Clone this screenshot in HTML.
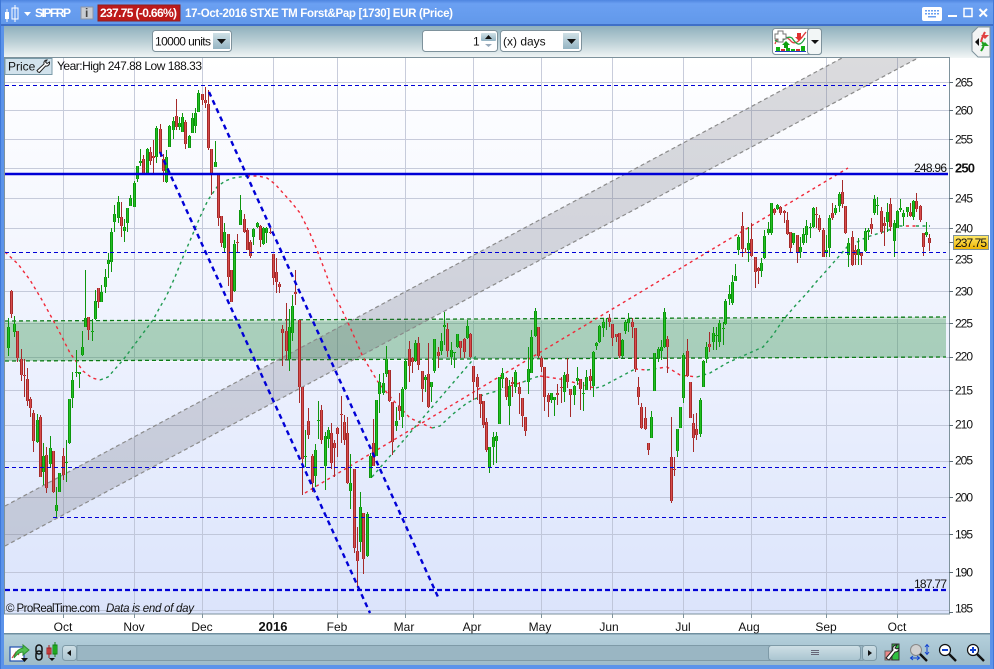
<!DOCTYPE html>
<html><head><meta charset="utf-8"><style>
html,body{margin:0;padding:0;background:#fff;width:994px;height:669px;overflow:hidden}
svg{display:block;position:absolute;left:0;top:0}
text{font-family:"Liberation Sans",sans-serif;font-size:12px;fill:#111}
</style></head><body>
<svg width="994" height="669" viewBox="0 0 994 669" xmlns="http://www.w3.org/2000/svg">
<defs>
<linearGradient id="tb" x1="0" y1="0" x2="0" y2="1"><stop offset="0" stop-color="#4f86e0"/><stop offset=".15" stop-color="#6ba0f2"/><stop offset="1" stop-color="#6198ea"/></linearGradient>
<linearGradient id="bar" x1="0" y1="0" x2="0" y2="1"><stop offset="0" stop-color="#8fb0bd"/><stop offset=".5" stop-color="#bcd0d6"/><stop offset="1" stop-color="#f2f6f6"/></linearGradient>
<linearGradient id="chart" x1="0" y1="0" x2="0" y2="1"><stop offset="0" stop-color="#ffffff"/><stop offset=".5" stop-color="#eef2fe"/><stop offset="1" stop-color="#dbe4fb"/></linearGradient>
<linearGradient id="bot" x1="0" y1="0" x2="0" y2="1"><stop offset="0" stop-color="#b5d0dc"/><stop offset="1" stop-color="#9dbbc9"/></linearGradient>
<linearGradient id="btn" x1="0" y1="0" x2="0" y2="1"><stop offset="0" stop-color="#cfe0e6"/><stop offset="1" stop-color="#94b4c3"/></linearGradient>
<linearGradient id="yel" x1="0" y1="0" x2="0" y2="1"><stop offset="0" stop-color="#ffe96a"/><stop offset="1" stop-color="#f0b400"/></linearGradient>
<linearGradient id="thumb" x1="0" y1="0" x2="0" y2="1"><stop offset="0" stop-color="#cfe0e6"/><stop offset="1" stop-color="#a9c4d0"/></linearGradient>
<path id="gw" d="M8 318V356M14 316V337M37 414V443M43 443V485M50 436V468M56 487V517M59 473V492M66 440V482M69 399V444M72 372V408M76 350V377M79 372V388M82 331V356M85 270V327M92 319V341M95 290V320M101 285V302M105 269V293M108 253V278M111 228V272M114 205V232M118 196V223M124 219V242M127 208V232M130 195V206M134 181V207M137 166V182M140 149V166M147 148V175M156 126V163M166 150V183M169 125V147M173 117V139M179 117V130M182 113V132M189 135V148M192 113V133M195 108V133M198 90V112M215 141V167M224 223V252M234 240V292M240 195V225M253 228V245M257 222V228M263 227V245M266 227V243M289 309V371M292 295V341M305 430V467M315 444V487M318 401V439M325 432V490M328 427V448M350 454V509M360 492V552M367 512V557M370 453V478M376 400V456M379 374V413M383 373V395M386 346V377M396 407V431M402 387V428M405 360V390M415 340V362M425 375V392M431 382V402M434 339V373M441 333V355M444 312V345M451 342V365M454 352V368M457 334V348M467 320V339M489 447V473M493 432V465M496 432V463M499 377V424M502 368V388M509 380V425M515 370V393M528 347V394M531 330V373M535 308V337M551 393V403M554 397V416M564 372V402M574 385V405M577 367V385M583 382V411M586 370V390M593 351V397M596 342V350M599 325V343M603 318V337M606 318V330M622 339V358M625 320V334M628 313V332M651 411V438M654 353V391M658 347V362M661 340V360M664 308V348M677 429V457M680 407V428M683 353V403M700 398V437M703 360V387M706 342V363M713 327V350M716 327V350M719 320V347M723 322V345M725 299V325M729 285V305M732 275V305M735 264V281M738 235V255M748 227V262M761 258V277M764 230V259M768 222V235M771 203V235M777 204V210M793 233V245M800 237V258M803 228V245M806 220V243M810 223V238M813 207V228M826 235V257M829 215V257M835 205V215M839 192V212M848 238V267M858 238V265M865 228V252M868 228V240M874 195V215M877 197V215M887 203V232M894 220V257M897 210V228M900 199V212M903 210V226M907 207V217M913 200V220M926 222V237"/>
<path id="gb" d="M8 327V348M14 324V332M37 420V442M43 456V472M50 448V464M56 505V511M59 473V492M66 462V463M69 399V443M72 380V398M76 372V373M79 372V374M82 347V355M85 318V327M92 331V332M95 301V319M101 292V302M105 277V287M108 260V264M111 232V262M114 214V222M118 202V218M124 227V231M127 208V223M130 198V206M134 183V207M137 166V179M140 161V163M147 149V173M156 128V157M166 157V182M169 126V147M173 121V130M179 123V127M182 117V132M189 136V148M192 118V133M195 113V126M198 93V112M215 162V167M224 232V248M234 244V291M240 210V225M253 229V237M257 223V227M263 228V244M266 228V233M289 327V359M292 306V333M305 456V457M315 450V476M318 420V421M325 436V466M328 430V439M350 483V491M360 507V542M367 514V556M370 456V478M376 400V456M379 382V394M383 383V393M386 359V374M396 421V426M402 389V417M405 361V389M415 343V361M425 377V380M431 382V387M434 339V371M441 341V351M444 325V327M451 350V357M454 352V353M457 334V347M467 326V338M489 447V467M493 437V447M496 436V441M499 377V424M502 373V379M509 386V406M515 372V387M528 369V382M531 337V373M535 311V336M551 393V400M554 397V400M564 375V392M574 386V395M577 378V381M583 393V394M586 377V390M593 352V386M596 343V346M599 326V342M603 322V328M622 340V356M625 322V331M628 319V323M651 417V438M654 353V391M658 349V358M661 347V351M664 312V347M677 429V451M680 407V428M683 355V398M700 400V434M703 361V387M706 347V359M713 333V342M716 335V336M719 323V342M723 328V329M725 301V324M729 294V299M732 282V303M735 276V281M738 237V250M748 243V250M761 263V271M764 236V258M768 229V233M771 203V233M777 205V209M793 233V243M800 247V252M803 234V243M806 226V235M810 227V228M813 208V227M826 250V253M829 218V248M835 208V213M839 194V206M848 243V255M858 249V255M865 231V251M868 230V232M874 199V213M877 205V206M887 212V222M894 223V241M897 211V228M900 208V210M903 213V217M907 207V212M913 201V217M926 232V235"/>
<path id="rw" d="M11 290V318M17 331V362M21 349V381M24 359V397M27 368V406M30 397V417M33 410V452M40 415V477M46 447V493M53 451V493M63 448V480M88 317V340M98 288V308M121 202V237M143 155V175M150 147V165M153 140V173M160 124V157M163 154V182M176 99V130M185 120V149M202 94V105M205 87V108M208 90V150M211 149V195M218 174V226M221 216V247M228 234V286M231 270V302M237 234V253M244 214V233M247 228V250M250 240V258M260 225V247M270 228V234M273 254V285M276 258V293M279 282V293M282 325V366M286 303V360M295 270V305M299 320V403M302 387V495M308 408V439M312 454V492M321 405V444M331 423V469M334 440V477M337 427V457M341 396V443M344 415V445M347 417V484M354 469V553M357 527V587M363 513V574M373 419V466M389 370V402M392 402V455M399 393V420M409 341V382M412 357V373M418 337V370M422 371V402M428 343V408M438 347V368M447 323V357M460 341V358M464 338V358M470 333V358M473 366V400M477 374V400M480 394V418M483 401V428M486 418V452M506 377V400M512 377V397M519 382V414M522 398V427M525 417V436M538 327V358M541 356V372M544 367V411M548 393V417M557 384V405M561 377V403M567 358V388M570 389V417M580 379V410M590 369V390M609 314V327M612 324V346M616 334V342M619 333V358M632 318V338M635 328V372M638 377V405M641 403V429M645 407V430M648 443V455M667 336V373M671 417V503M674 457V476M687 339V377M690 382V418M693 414V452M696 413V440M709 332V352M742 212V257M745 248V253M751 223V257M755 257V288M758 267V284M774 208V215M780 206V215M784 210V223M787 212V235M790 232V253M797 235V263M816 207V228M819 215V232M823 228V257M832 203V220M842 180V208M845 206V234M852 231V266M855 245V265M861 252V265M871 218V234M881 207V234M884 217V246M890 198V231M910 203V217M916 193V212M920 205V222M923 233V256M929 234V251"/>
<path id="rb" d="M11 291V314M17 331V358M21 359V375M24 375V376M27 379V401M30 399V408M33 413V441M40 417V477M46 455V488M53 451V492M63 456V475M88 317V330M98 288V302M121 217V226M143 159V173M150 152V161M153 156V158M160 129V153M163 159V171M176 116V127M185 122V144M202 94V100M205 100V103M208 104V148M211 149V173M218 174V218M221 216V243M228 234V277M231 270V302M237 242V243M244 219V232M247 230V250M250 242V256M260 226V240M270 232V233M273 254V278M276 272V282M279 284V287M282 329V333M286 331V351M295 292V294M299 320V387M302 387V459M308 421V435M312 456V483M321 410V440M331 433V463M334 443V448M337 428V434M341 414V415M344 422V440M347 433V483M354 469V548M357 551V561M363 513V559M373 443V466M389 370V401M392 402V442M399 406V411M409 349V366M412 358V362M418 343V365M422 371V389M428 374V407M438 352V356M447 329V351M460 341V348M464 339V352M470 334V357M473 366V382M477 377V387M480 394V404M483 401V425M486 422V450M506 378V397M512 382V384M519 387V394M522 398V416M525 417V431M538 327V356M541 358V367M544 367V397M548 395V402M557 393V395M561 387V388M567 374V382M570 389V395M580 379V389M590 376V381M609 318V322M612 324V338M616 334V337M619 333V356M632 322V327M635 328V369M638 387V397M641 407V428M645 418V429M648 443V450M667 339V347M671 457V501M674 469V470M687 351V376M690 382V418M693 423V438M696 429V435M709 344V347M742 226V249M745 252V253M751 239V256M755 257V272M758 268V271M774 209V213M780 207V213M784 211V213M787 220V234M790 232V248M797 235V252M816 214V215M819 218V230M823 230V257M832 213V218M842 192V204M845 206V233M852 237V265M855 250V255M861 252V256M871 224V229M881 211V232M884 223V226M890 204V227M910 212V216M916 201V209M920 206V220M923 233V247M929 238V243"/>
</defs>

<!-- window frame -->
<rect width="994" height="669" fill="#5b93ea"/>
<rect x="0" y="0" width="994" height="25" fill="url(#tb)"/>
<rect x="0" y="24" width="994" height="2" fill="#3f70c8"/>
<rect x="4" y="26" width="986" height="32" fill="url(#bar)"/>
<rect x="4" y="58" width="986" height="576" fill="#fff"/>
<rect x="4" y="634" width="986" height="31" fill="url(#bot)"/>
<rect x="4" y="633" width="986" height="1.5" fill="#6f8f9f"/>
<rect x="0" y="0" width="1" height="669" fill="#3f78d8"/>
<rect x="993" y="0" width="1" height="669" fill="#3f78d8"/>

<!-- chart bg -->
<rect x="5" y="58" width="944" height="556" fill="url(#chart)"/>
<!-- grid -->
<g stroke="#b6bccf" stroke-width="1" opacity=".75">
<path d="M5 82.5H949M5 110.5H949M5 139.5H949M5 168.5H949M5 198.5H949M5 228.5H949M5 259.5H949M5 291.5H949M5 323.5H949M5 357.5H949M5 390.5H949M5 425.5H949M5 461.5H949M5 497.5H949M5 534.5H949M5 572.5H949M5 610.5H949"/>
<path d="M63.5 58V614M134.5 58V614M202.5 58V614M273.5 58V614M337.5 58V614M405.5 58V614M473.5 58V614M541.5 58V614M612.5 58V614M683.5 58V614M751.5 58V614M826.5 58V614M897.5 58V614"/>
</g>

<!-- green zone -->
<polygon points="5,321 946,317 946,357 5,361" fill="#2f8f45" fill-opacity=".36"/>
<g fill="none" stroke-width="1.3">
<path d="M5 321L946 317M5 361L946 357" stroke="#fff" stroke-opacity=".5" transform="translate(0,1)"/>
<path d="M5 321L946 317M5 361L946 357" stroke="#0a7a16" stroke-dasharray="4 3"/>
</g>
<!-- grey band -->
<polygon points="5,506 842,58 918,58 5,546" fill="#5a5a64" fill-opacity=".22"/>
<path d="M5 506L842 58M5 546L918 58" fill="none" stroke="#8b8b8b" stroke-width="1.2" stroke-dasharray="4 3"/>

<!-- moving avg -->
<g fill="none" stroke-width="1.4" stroke-dasharray="3 3.5">
<path stroke="#f02838" d="M5 252L18 264L30 280L42 300L53 320L62 337L70 353L83 371L92 378L100 380"/>
<path stroke="#1f9a50" d="M100 380L108 377L123 360L138 340L153 320L160 307L166 297L175 277L183 257L192 236L200 217L208 200L217 187L225 181L233 178L247 176"/>
<path stroke="#f02838" d="M247 176L258 176L267 178L275 184L283 193L292 203L300 213L309 231L317 250L325 271L333 293L341 308L350 327L363 357L378 382L393 400L410 418L423 424L432 428"/>
<path stroke="#1f9a50" d="M432 428L440 426L453 414L467 403L483 395L497 391L510 386"/>
<path stroke="#f02838" d="M510 386L523 382"/>
<path stroke="#1f9a50" d="M523 382L533 378L540 376"/>
<path stroke="#f02838" d="M540 376L560 379L580 384L590 387L596 388"/>
<path stroke="#1f9a50" d="M596 388L603 386L620 377L635 369"/>
<path stroke="#f02838" d="M635 369L647 370"/>
<path stroke="#1f9a50" d="M647 370L660 368"/>
<path stroke="#f02838" d="M660 368L667 367L680 375L697 377"/>
<path stroke="#1f9a50" d="M697 377L710 373L727 363L745 355L763 347L773 335L783 320L795 306L807 293L817 281L827 270L847 247L867 237L883 232L900 226L906 226"/>
<path stroke="#f02838" d="M906 226H916"/>
<path stroke="#1f9a50" d="M916 226H930"/>
<path stroke="#1f9a50" d="M372 477L477 355"/>
<path stroke="#f02838" d="M305 493L848 168"/>
</g>

<!-- candles -->
<g transform="translate(.5,0)" fill="none">
<use href="#gw" stroke="#0e950e" stroke-width="1"/>
<use href="#rw" stroke="#a52a2a" stroke-width="1"/>
<use href="#gb" stroke="#0c960c" stroke-width="3"/>
<use href="#gb" stroke="#22bf22" stroke-width="1"/>
<use href="#rb" stroke="#a52a2a" stroke-width="3"/>
<use href="#rb" stroke="#d84c4c" stroke-width="1"/>
</g>

<!-- levels -->
<g fill="none" stroke="#0000d6">
<path d="M5 85.5H946M5 252.5H946M5 467.5H946M53 517.5H946" stroke-width="1" stroke-dasharray="4 3"/>
<path d="M5 174H948" stroke-width="2.4"/>
<path d="M5 590H948" stroke-width="2.2" stroke-dasharray="5 3"/>
<path d="M160 152L370 613M209 92L438 597" stroke-width="2.4" stroke-dasharray="5 4"/>
</g>

<!-- chart border -->
<path d="M4.5 58V614H949.5V57.5H4" fill="none" stroke="#7e929c" stroke-width="1"/>
<rect x="949" y="58" width="1" height="556" fill="#7e929c"/>

<!-- top left chart labels -->
<rect x="5" y="58.5" width="47" height="16" fill="#d2e2ec" stroke="#7a9aa8"/>
<text x="8" y="70.5">Price</text>
<g fill="none" stroke="#222" stroke-width="1" transform="translate(36,59)"><path d="M2 13L1 11.5L8 5C7.5 3 8.5 1 11 1L9.5 3L11 4.5L13.5 3C14 5.5 12 7.5 9.5 7L3.5 13.5Z" fill="#fff"/></g>
<text x="57" y="70" textLength="145" lengthAdjust="spacing">Year:High 247.88 Low 188.33</text>
<text x="6" y="612" style="font-size:11.5px" textLength="94">© ProRealTime.com</text>
<text x="106" y="612" style="font-style:italic;font-size:11.5px" textLength="88">Data is end of day</text>

<!-- level labels -->
<text x="914" y="172" textLength="33">248.96</text>
<text x="914" y="588" textLength="33">187.77</text>

<!-- y axis -->
<g stroke="#5a6a74" stroke-width="1"><path d="M949 82.5H953M949 110.5H953M949 139.5H953M949 168.5H953M949 198.5H953M949 228.5H953M949 242.5H953M949 259.5H953M949 291.5H953M949 323.5H953M949 357.5H953M949 390.5H953M949 425.5H953M949 461.5H953M949 497.5H953M949 534.5H953M949 572.5H953M949 612.5H953"/></g>
<g>
<text x="955" y="86.5" textLength="18">265</text><text x="955" y="114.5" textLength="18">260</text><text x="955" y="143.5" textLength="18">255</text>
<text x="955" y="172.5" textLength="20" style="font-weight:bold;font-size:13px">250</text>
<text x="955" y="202.5" textLength="18">245</text><text x="955" y="232.5" textLength="18">240</text><text x="955" y="263.5" textLength="18">235</text><text x="955" y="295.5" textLength="18">230</text><text x="955" y="327.5" textLength="18">225</text><text x="955" y="360.5" textLength="18">220</text><text x="955" y="394.5" textLength="18">215</text><text x="955" y="428.5" textLength="18">210</text><text x="955" y="464.5" textLength="18">205</text><text x="955" y="501.5" textLength="18">200</text><text x="955" y="538.5" textLength="18">195</text><text x="955" y="576.5" textLength="18">190</text><text x="955" y="612.5" textLength="18">185</text>
</g>
<rect x="953.5" y="235.5" width="35" height="14" fill="url(#yel)" stroke="#7f929c"/>
<text x="955" y="247" textLength="32">237.75</text>

<!-- x axis -->
<g stroke="#7e929c"><path d="M63.5 614V618M134.5 614V618M202.5 614V618M273.5 614V618M337.5 614V618M405.5 614V618M473.5 614V618M541.5 614V618M612.5 614V618M683.5 614V618M751.5 614V618M826.5 614V618M897.5 614V618"/></g>
<g text-anchor="middle">
<text x="63" y="631">Oct</text><text x="134" y="631">Nov</text><text x="202" y="631">Dec</text>
<text x="273" y="631" style="font-weight:bold;font-size:13px">2016</text>
<text x="337" y="631">Feb</text><text x="404" y="631">Mar</text><text x="472" y="631">Apr</text><text x="540" y="631">May</text><text x="609" y="631">Jun</text><text x="683" y="631">Jul</text><text x="749" y="631">Aug</text><text x="826" y="631">Sep</text><text x="897" y="631">Oct</text>
</g>

<!-- title bar -->
<g fill="#fff">
<rect x="5" y="12" width="4" height="7"/><rect x="6.5" y="9" width="1" height="13"/>
<rect x="12" y="8" width="6" height="11" fill="none" stroke="#fff"/><rect x="14.5" y="5" width="1" height="17"/>
<polygon points="24,12 31,12 27.5,16"/>
</g>
<text x="35" y="17" style="font-weight:bold;font-size:12px;fill:#fff" textLength="36">SIPFRP</text>
<rect x="81" y="7" width="12" height="12" fill="#c8ccd2" stroke="#8b95a8"/>
<text x="85" y="17" style="font-weight:bold;font-size:12px;fill:#444">i</text>
<rect x="98" y="5" width="82" height="16" fill="#bd1a1a" stroke="#8d2020"/>
<text x="100" y="17" style="font-weight:bold;font-size:12px;fill:#fff" textLength="77">237.75 (-0.66%)</text>
<text x="185" y="17" style="font-weight:bold;font-size:11.5px;fill:#fff" textLength="268">17-Oct-2016 STXE TM Forst&amp;Pap [1730] EUR (Price)</text>
<!-- keyboard & window controls -->
<rect x="922" y="7" width="20" height="14" rx="2" fill="#fff"/>
<g fill="#6a9ff0"><path d="M925 10h2v1.5h-2zM928 10h2v1.5h-2zM931 10h2v1.5h-2zM934 10h2v1.5h-2zM937 10h2v1.5h-2zM925 13h2v1.5h-2zM928 13h2v1.5h-2zM931 13h2v1.5h-2zM934 13h2v1.5h-2zM937 13h2v1.5h-2zM928 16h8v1.5h-8z"/></g>
<rect x="948" y="15" width="9" height="2" fill="#fff"/>
<rect x="964" y="8.5" width="8" height="8" fill="none" stroke="#fff" stroke-width="1.5"/>
<path d="M979.5 9L987 16.5M987 9L979.5 16.5" stroke="#fff" stroke-width="2" fill="none"/>

<!-- toolbar controls -->
<rect x="152.5" y="30.5" width="79" height="21" rx="3" fill="#fff" stroke="#7e929c"/>
<text x="155" y="45.5" textLength="56">10000 units</text>
<rect x="213" y="33" width="17" height="16" fill="url(#btn)"/>
<polygon points="217,39 226,39 221.5,44" fill="#111"/>

<rect x="422.5" y="30.5" width="75" height="21" rx="3" fill="#fff" stroke="#7e929c"/>
<text x="473" y="45.5">1</text>
<rect x="481" y="33" width="15" height="8" rx="1" fill="url(#btn)"/>
<polygon points="485,39 492,39 488.5,35" fill="#111"/>
<polygon points="485,44 492,44 488.5,47" fill="#9ab"/>
<rect x="500.5" y="30.5" width="81" height="21" rx="3" fill="#fff" stroke="#7e929c"/>
<text x="503" y="45.5">(x) days</text>
<rect x="563" y="33" width="16" height="16" fill="url(#btn)"/>
<polygon points="567,39 576,39 571.5,44" fill="#111"/>

<!-- indicator button -->
<rect x="772.5" y="28.5" width="49" height="26" rx="3" fill="#fff" stroke="#7e929c"/>
<rect x="807.5" y="28.5" width="14" height="26" rx="3" fill="#f2f6f6" stroke="#7e929c"/>
<polygon points="811,40 819,40 815,44" fill="#111"/>
<path d="M775 44C780 30 785 36 790 40C795 47 800 40 806 32" fill="none" stroke="#e04040" stroke-width="1.3"/>
<path d="M775 40C781 46 786 34 792 38C796 44 800 48 805 38" fill="none" stroke="#20a040" stroke-width="1.3"/>
<path d="M778 31h5v3h3v5h-3v3h-5v-3h-3v-5h3z" fill="#fff" stroke="#777"/>
<polygon points="786,41 790,45 788,45 788,48 784,48 784,45 782,45" fill="#10a010"/>
<polygon points="797,33 801,33 801,37 803,37 799,41 795,37 797,37" fill="#e03030"/>
<g fill="#10b010"><rect x="776" y="47" width="4" height="4"/><rect x="786" y="48" width="4" height="3"/><rect x="791" y="49" width="4" height="2"/><rect x="801" y="46" width="4" height="5"/></g>
<g fill="#d03030"><rect x="781" y="49" width="4" height="2"/><rect x="796" y="49" width="4" height="2"/></g>
<rect x="775" y="51" width="31" height="1" fill="#2040c0"/>

<!-- right tab -->
<path d="M990 27H978L972 33V51L978 57H990Z" fill="#f2f4f4" stroke="#7e929c"/>
<polygon points="979,38 975,42 979,46" fill="#111"/>
<path d="M985 32C983 36 982 37 981 42" fill="none" stroke="#e04040" stroke-width="2"/><polygon points="981,35 989,35 985,39" fill="#e04040"/>
<path d="M982 42C985 45 983 48 981 51" fill="none" stroke="#20a020" stroke-width="2"/><polygon points="981,46 989,46 985,42" fill="#20a020"/>

<!-- bottom bar -->
<rect x="10" y="647" width="14" height="14" fill="#fff" stroke="#2050b0" stroke-width="1.2"/>
<path d="M12 658L16 652L19 655" fill="none" stroke="#d03030"/>
<path d="M14 658C15 652 19 649 23 648V645L29 650L23 655V652C20 652 17 654 14 658Z" fill="#50c050" stroke="#2f8f2f"/>
<polygon points="21,658 28,658 24.5,662" fill="#111"/>
<g fill="none" stroke="#111" stroke-width="1.5"><rect x="36" y="645" width="6" height="9" rx="3"/><rect x="36" y="651" width="6" height="9" rx="3"/></g>
<rect x="47" y="648" width="4" height="6" fill="#e85858" stroke="#a02020"/><path d="M49 645V658" stroke="#a02020"/>
<rect x="53" y="645" width="4" height="9" fill="#30d030" stroke="#108010"/><path d="M55 642V657" stroke="#108010"/>
<polygon points="49,658 55,658 52,661" fill="#111"/>

<rect x="77" y="645" width="786" height="16" fill="#9ab6c3"/>
<rect x="77" y="645.5" width="786" height="15" fill="none" stroke="#7e9aa7"/>
<rect x="62.5" y="645.5" width="14" height="15" rx="3" fill="url(#thumb)" stroke="#7e9aa7"/>
<polygon points="71,650 67,653 71,656" fill="#111"/>
<rect x="768.5" y="645.5" width="92" height="15" rx="3" fill="url(#thumb)" stroke="#7e9aa7"/>
<path d="M811 650.5h8M811 652.5h8M811 654.5h8" stroke="#667" stroke-width="1"/>
<rect x="862.5" y="645.5" width="14" height="15" rx="3" fill="url(#thumb)" stroke="#7e9aa7"/>
<polygon points="868,650 872,653 868,656" fill="#111"/>

<rect x="885" y="651" width="6" height="9" fill="#e88" stroke="#666"/>
<rect x="892" y="644" width="7" height="16" fill="#30c040" stroke="#333"/>
<path d="M886 658L893 650C892 647 894 645 897 645L895 648L897 649L899 648C899 651 897 652 895 652L889 660Z" fill="#fff" stroke="#222"/>

<circle cx="916" cy="650" r="5.5" fill="#d0d0d0" stroke="#888"/>
<path d="M920 654L927 661" stroke="#111" stroke-width="2.4"/>
<path d="M927 645V654M925 647L927 644.5L929 647M925 652L927 654.5L929 652M911 658H919M913 656L910.5 658L913 660M917 656L919.5 658L917 660" fill="none" stroke="#1040d0" stroke-width="1"/>

<circle cx="945" cy="650" r="5.5" fill="#fff" stroke="#111" stroke-width="1.2"/>
<path d="M942 650H948" stroke="#1040d0" stroke-width="2"/>
<path d="M949 654L956 661" stroke="#111" stroke-width="2.4"/>

<circle cx="973" cy="650" r="5.5" fill="#fff" stroke="#111" stroke-width="1.2"/>
<path d="M970 650H976M973 647V653" stroke="#1040d0" stroke-width="2"/>
<path d="M977 654L984 661" stroke="#111" stroke-width="2.4"/>
</svg>
</body></html>
